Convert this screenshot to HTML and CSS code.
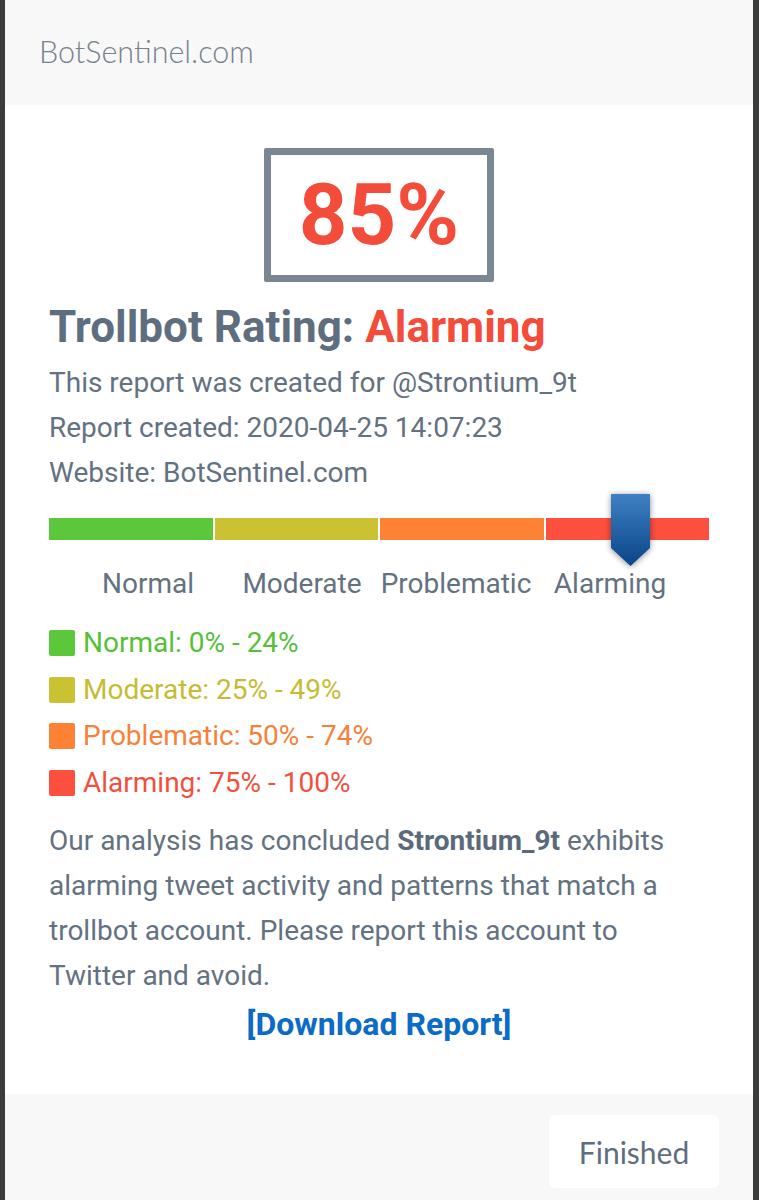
FILE: index.html
```html
<!DOCTYPE html>
<html>
<head>
<meta charset="utf-8">
<link rel="stylesheet" href="styles.css">
</head>
<body>
<div class="modal">
  <div class="modal-header">BotSentinel.com</div>
  <div class="modal-body">
    <div class="score-box">85%</div>
    <h1 class="rating">Trollbot Rating: <span class="alarm">Alarming</span></h1>
    <p class="meta">This report was created for @Strontium_9t</p>
    <p class="meta">Report created: 2020-04-25 14:07:23</p>
    <p class="meta">Website: BotSentinel.com</p>
    <div class="scale">
      <div class="bar">
        <div class="seg green"></div>
        <div class="seg yellow"></div>
        <div class="seg orange"></div>
        <div class="seg red"></div>
      </div>
      <svg class="marker" width="55" height="94" viewBox="0 0 55 94">
        <defs>
          <linearGradient id="mg" x1="0" y1="0" x2="0" y2="1">
            <stop offset="0" stop-color="#3d80c3"/>
            <stop offset="1" stop-color="#0a4588"/>
          </linearGradient>
          <filter id="sh" x="-40%" y="-20%" width="180%" height="150%">
            <feGaussianBlur in="SourceAlpha" stdDeviation="3"/>
            <feOffset dx="0" dy="1"/>
            <feComponentTransfer><feFuncA type="linear" slope="0.45"/></feComponentTransfer>
            <feMerge><feMergeNode/><feMergeNode in="SourceGraphic"/></feMerge>
          </filter>
        </defs>
        <path d="M8 8 H47 V62 L27.5 80 L8 62 Z" fill="url(#mg)" filter="url(#sh)"/>
      </svg>
    </div>
    <div class="labels">
      <span>Normal</span><span>Moderate</span><span>Problematic</span><span>Alarming</span>
    </div>
    <ul class="legend">
      <li class="l-green"><i></i>Normal: 0% - 24%</li>
      <li class="l-yellow"><i></i>Moderate: 25% - 49%</li>
      <li class="l-orange"><i></i>Problematic: 50% - 74%</li>
      <li class="l-red"><i></i>Alarming: 75% - 100%</li>
    </ul>
    <p class="summary">Our analysis has concluded <b>Strontium_9t</b> exhibits alarming tweet activity and patterns that match a trollbot account. Please report this account to Twitter and avoid.</p>
    <div class="download"><a href="#">[Download Report]</a></div>
  </div>
  <div class="modal-footer">
    <button class="btn">Finished</button>
  </div>
</div>
</body>
</html>
```
FILE: styles.css
```css
html, body { margin: 0; padding: 0; }
body {
  background: #3b3d3c;
  font-family: Roboto, "Liberation Sans", sans-serif;
  color: #637181;
}
.modal {
  margin: 0 6px 0 5px;
  background: #fff;
  height: 1200px;
  display: flex;
  flex-direction: column;
}
.modal-header {
  background: #f8f8f8;
  height: 105px;
  box-sizing: border-box;
  padding: 31px 0 0 34px;
  font-family: Lato, sans-serif;
  font-weight: 300;
  font-size: 30.5px;
  color: #76818c;
  line-height: 40px;
}
.modal-body {
  flex: 1;
  padding: 43px 44px 0 44px;
}
.score-box {
  width: 230px;
  height: 134px;
  box-sizing: border-box;
  margin: 0 auto;
  border: 7px solid #7a8793;
  border-radius: 2px;
  color: #f44c3a;
  font-weight: 700;
  font-size: 85px;
  display: flex;
  align-items: center;
  justify-content: center;
}
.rating {
  margin: 20px 0 0 0;
  font-size: 44px;
  font-weight: 700;
  line-height: 50px;
  color: #5f6e7e;
}
.alarm { color: #f44c3a; }
.meta {
  margin: 0;
  font-size: 28px;
  line-height: 45px;
}
.meta:first-of-type { margin-top: 8px; }
.scale {
  position: relative;
  margin-top: 23px;
}
.bar {
  display: flex;
  gap: 2px;
  height: 22px;
}
.seg { flex: 1; }
.green { background: #5ac83a; }
.yellow { background: #cbc233; }
.orange { background: #fd8233; }
.red { background: #fd4f3e; }
.marker {
  position: absolute;
  left: 554px;
  top: -32px;
}
.labels {
  display: grid;
  grid-template-columns: repeat(4, 154px);
  justify-content: center;
  margin-top: 21px;
  font-size: 28px;
  line-height: 45px;
  text-align: center;
  white-space: nowrap;
}
.legend {
  list-style: none;
  margin: 14px 0 0 0;
  padding: 0;
}
.legend li {
  display: flex;
  align-items: center;
  font-size: 28px;
  line-height: 46.5px;
}
.legend i {
  display: inline-block;
  width: 26px;
  height: 26px;
  border-radius: 2px;
  margin-right: 8px;
}
.l-green { color: #56bf3a; }
.l-green i { background: #5ac83a; }
.l-yellow { color: #c5bc34; }
.l-yellow i { background: #cbc233; }
.l-orange { color: #f7813a; }
.l-orange i { background: #fd8233; }
.l-red { color: #f2503f; }
.l-red i { background: #fd4f3e; }
.summary {
  margin: 12px 0 0 0;
  font-size: 28px;
  line-height: 45px;
}
.summary b { font-weight: 700; color: #5b6a7a; }
.download {
  text-align: center;
  margin-top: 4px;
  line-height: 45px;
}
.download a {
  color: #0b6bc6;
  font-weight: 700;
  font-size: 32px;
  text-decoration: none;
}
.modal-footer {
  background: #f8f8f8;
  height: 106px;
  box-sizing: border-box;
  padding: 21px 34px 0 0;
  display: flex;
  justify-content: flex-end;
  align-items: flex-start;
}
.btn {
  background: #fff;
  border: none;
  border-radius: 6px;
  width: 170px;
  height: 73px;
  font-family: Lato, sans-serif;
  font-size: 30px;
  color: #5f6e7e;
  padding: 0;
}
```
